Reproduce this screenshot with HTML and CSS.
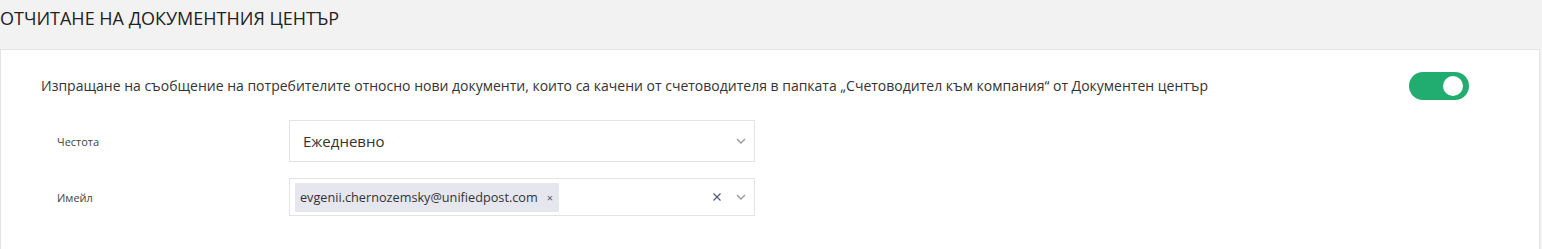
FILE: index.html
```html
<!DOCTYPE html>
<html lang="bg">
<head>
<meta charset="utf-8">
<link rel="stylesheet" href="styles.css">
</head>
<body>
<div class="page">
  <h1 class="title">ОТЧИТАНЕ НА ДОКУМЕНТНИЯ ЦЕНТЪР</h1>
  <div class="card">
    <div class="row-main">
      <div class="main-text">Изпращане на съобщение на потребителите относно нови документи, които са качени от счетоводителя в папката „Счетоводител към компания“ от Документен център</div>
      <div class="toggle"><span class="knob"></span></div>
    </div>
    <div class="field field-freq">
      <div class="label">Честота</div>
      <div class="select">
        <span class="value">Ежедневно</span>
        <span class="indicators">
          <svg class="chev" width="10" height="6" viewBox="0 0 10 6"><path d="M1 1l4 4 4-4" fill="none" stroke="#999" stroke-width="1.4"/></svg>
        </span>
      </div>
    </div>
    <div class="field field-mail">
      <div class="label">Имейл</div>
      <div class="select multi">
        <span class="tag">evgenii.chernozemsky@unifiedpost.com<span class="tag-x">×</span></span>
        <span class="indicators">
          <svg class="clear" width="8" height="8" viewBox="0 0 8 8"><path d="M0.5 0.5l7 7M7.5 0.5l-7 7" stroke="#4a5478" stroke-width="1.1"/></svg>
          <svg class="chev" width="10" height="6" viewBox="0 0 10 6"><path d="M1 1l4 4 4-4" fill="none" stroke="#999" stroke-width="1.4"/></svg>
        </span>
      </div>
    </div>
  </div>
</div>
</body>
</html>
```

FILE: styles.css
```css
html, body {
  margin: 0;
  padding: 0;
  background: #f2f2f2;
  font-family: "Open Sans", "Liberation Sans", sans-serif;
  color: #333;
}
.page {
  width: 1540px;
}
.title {
  margin: 0;
  height: 49px;
  padding-top: 4px;
  box-sizing: border-box;
  font-size: 18px;
  font-weight: 400;
  line-height: 28px;
  color: #222;
}
.card {
  background: #fff;
  border: 1px solid #e3e3e3;
  border-bottom: none;
  height: 200px;
  box-sizing: border-box;
}
.row-main {
  display: flex;
  align-items: center;
  justify-content: space-between;
  padding: 22px 70px 0 40px;
  height: 50px;
  box-sizing: border-box;
}
.main-text {
  font-size: 14px;
  line-height: 28px;
  color: #333;
}
.toggle {
  width: 60px;
  height: 28px;
  border-radius: 14px;
  background: #20ad6f;
  display: flex;
  align-items: center;
  justify-content: flex-end;
  padding-right: 6px;
  box-sizing: border-box;
}
.knob {
  width: 20px;
  height: 20px;
  border-radius: 50%;
  background: #fff;
}
.field {
  display: flex;
  align-items: center;
}
.field-freq { margin-top: 20px; }
.field-mail { margin-top: 16px; }
.label {
  width: 232px;
  padding-left: 56px;
  font-size: 11px;
  color: #444;
}
.select {
  width: 466px;
  height: 42px;
  border: 1px solid #e3e3e3;
  box-sizing: border-box;
  display: flex;
  align-items: center;
  justify-content: space-between;
  padding: 0 8px 0 13px;
}
.select.multi {
  height: 38px;
  padding-left: 5px;
}
.value {
  font-size: 15px;
  color: #333;
}
.tag {
  display: flex;
  align-items: center;
  height: 29px;
  background: #e6e6ef;
  padding: 0 6px 0 5px;
  font-size: 12.7px;
  color: #333;
  border-radius: 1px;
}
.tag-x {
  font-size: 11px;
  margin-left: 9px;
  color: #555;
}
.indicators {
  display: flex;
  align-items: center;
  gap: 15px;
}
.chev { display: block; }
.clear { display: block; }
```
